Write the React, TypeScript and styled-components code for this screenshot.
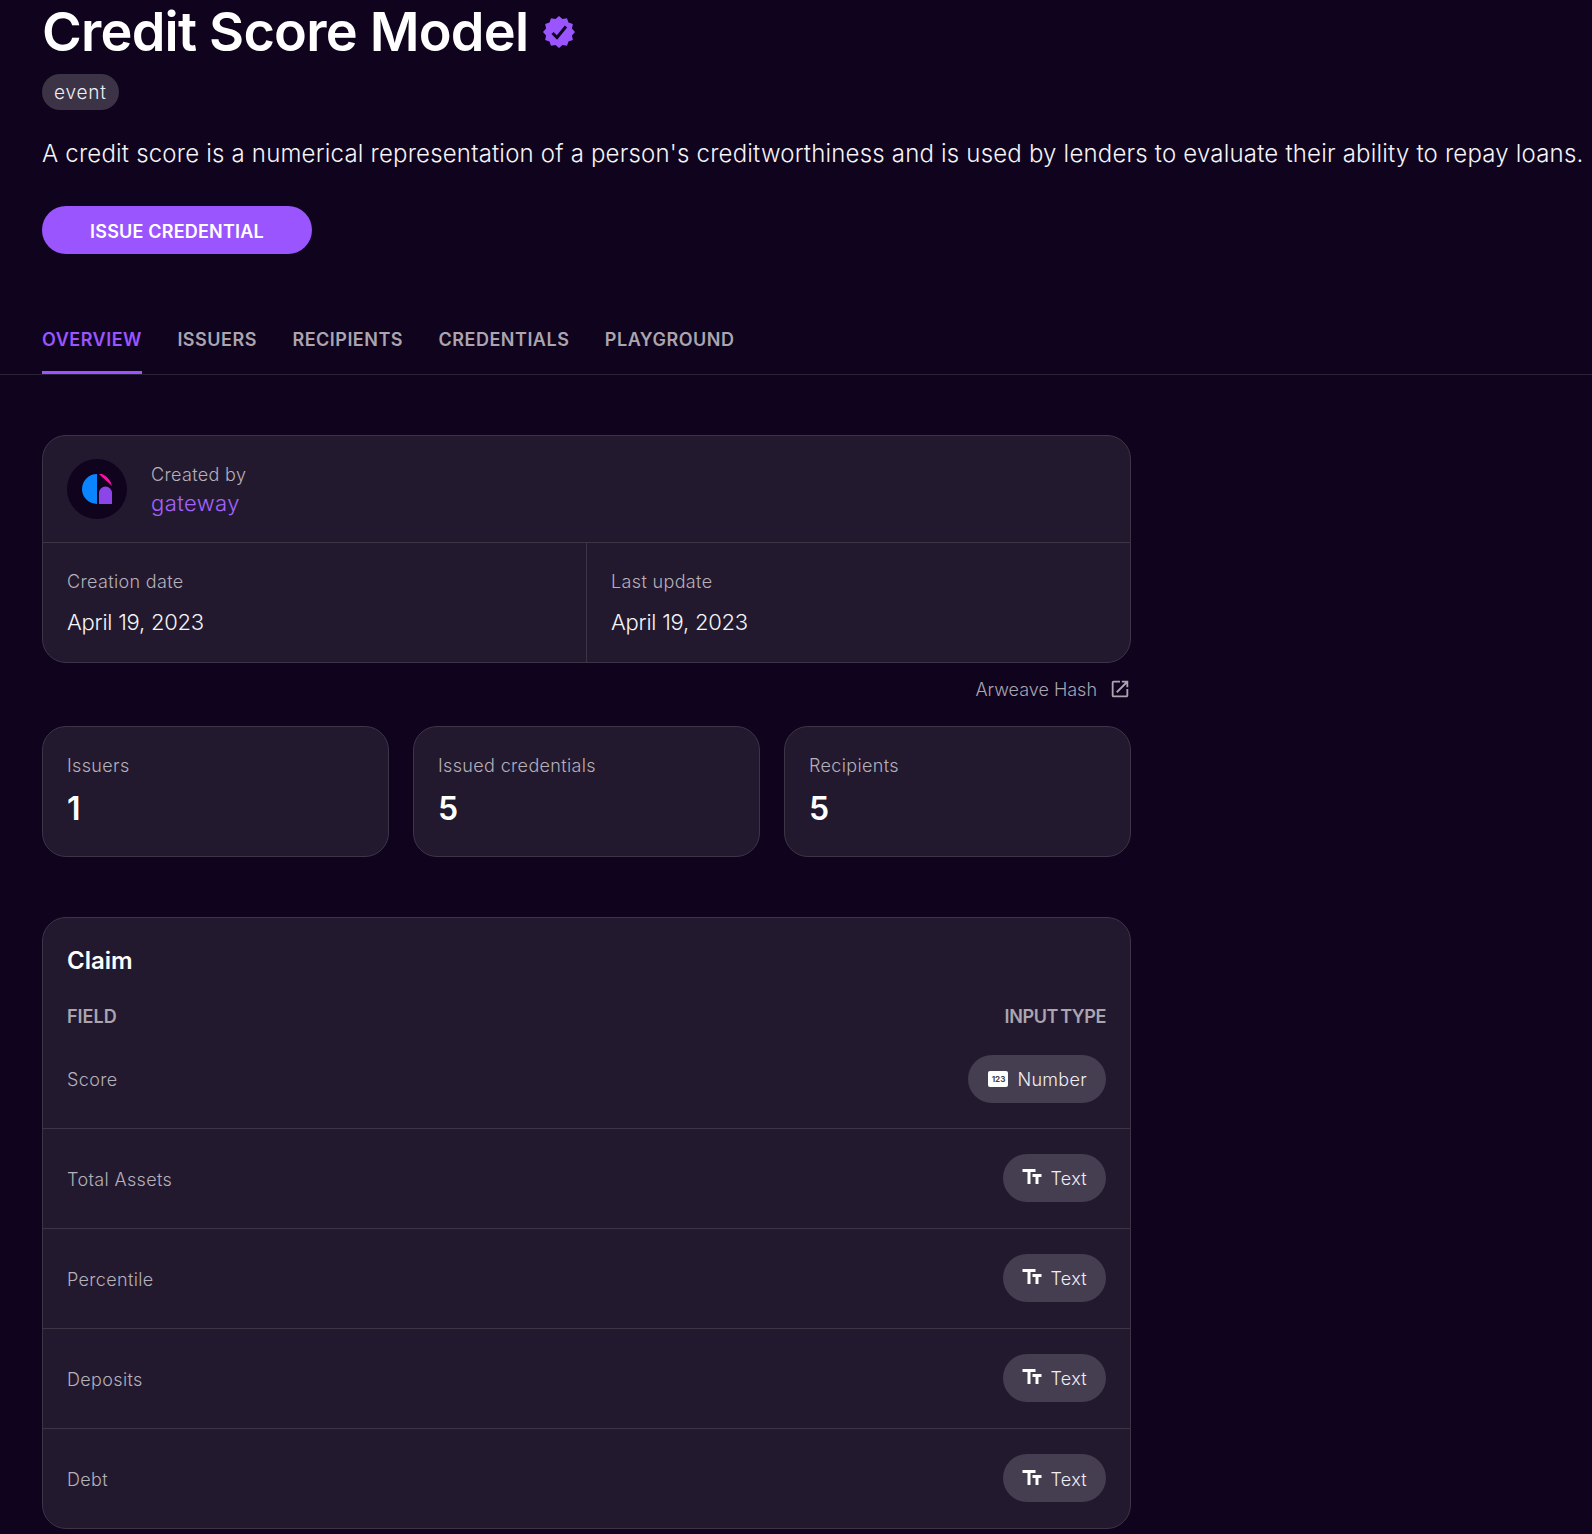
import React from 'react'
import styled, { createGlobalStyle } from 'styled-components'
import { MdOutlineOpenInNew, MdTextFields } from 'react-icons/md'

const GlobalStyle = createGlobalStyle`
  html, body {
    margin: 0;
    padding: 0;
    background: #0f031e;
  }
  body {
    color: #ffffff;
    font-family: 'Inter', 'Liberation Sans', sans-serif;
  }
  * {
    box-sizing: border-box;
  }
`

const Page = styled.div`
  width: 1592px;
  height: 1534px;
  overflow: hidden;
  background: #0f031e;
`

const Header = styled.header`
  padding: 0 0 0 42px;
  height: 375px;
  border-bottom: 1px solid #2b2235;
  display: flex;
  flex-direction: column;
  align-items: flex-start;
`

const TitleRow = styled.div`
  display: flex;
  align-items: center;
  gap: 15px;
  height: 64px;
`

const Title = styled.h1`
  margin: 0;
  font-size: 54px;
  line-height: 64px;
  font-weight: 600;
  letter-spacing: -0.77px;
`

const BadgeIcon = styled.svg`
  width: 32px;
  height: 32px;
`

const TypeChip = styled.span`
  margin-top: 10px;
  height: 36px;
  padding: 1px 12px 0;
  display: inline-flex;
  align-items: center;
  border-radius: 18px;
  background: #3c3347;
  font-size: 19px;
  font-weight: 300;
  letter-spacing: 0.8px;
  color: #f0eef2;
`

const Description = styled.p`
  margin: 26px 0 0;
  font-size: 24px;
  line-height: 36px;
  font-weight: 300;
  white-space: nowrap;
  color: #f5f4f6;
  letter-spacing: 0.19px;
`

const PrimaryButton = styled.button`
  margin-top: 34px;
  width: 270px;
  height: 49px;
  padding: 3px 0 0;
  border: 0;
  border-radius: 25px;
  background: #9a55ff;
  color: #ffffff;
  font-family: inherit;
  font-size: 18px;
  font-weight: 600;
  letter-spacing: 0.2px;
`

const Tabs = styled.nav`
  margin-top: 63px;
  display: flex;
  gap: 35.5px;
`

const Tab = styled.span<{ $active?: boolean }>`
  height: 57px;
  padding-top: 9px;
  line-height: 28px;
  font-size: 18px;
  font-weight: 600;
  letter-spacing: 0.5px;
  color: ${({ $active }) => ($active ? '#9a55ff' : '#aaa5af')};
  border-bottom: 3px solid ${({ $active }) => ($active ? '#9a55ff' : 'transparent')};
`

const Content = styled.main`
  width: 1173px;
  padding: 60px 42px 0;
`

const Card = styled.section`
  background: #23192e;
  border: 1px solid #3d3446;
  border-radius: 24px;
`

const CreatorRow = styled.div`
  height: 107px;
  padding: 0 24px;
  display: flex;
  align-items: center;
  gap: 24px;
  border-bottom: 1px solid #3d3446;
`

const Avatar = styled.svg`
  width: 60px;
  height: 60px;
  flex: none;
`

const CreatorText = styled.div`
  display: flex;
  flex-direction: column;
  padding-top: 1px;
`

const MutedLabel = styled.span`
  font-size: 18px;
  line-height: 28px;
  font-weight: 300;
  letter-spacing: 0.35px;
  color: #b5b0ba;
`

const CreatorName = styled.span`
  font-size: 22px;
  line-height: 29px;
  font-weight: 300;
  letter-spacing: 0.4px;
  color: #a463ff;
`

const DateGrid = styled.div`
  display: grid;
  grid-template-columns: 543px 1fr;
`

const DateCell = styled.div`
  height: 119px;
  padding: 25px 24px 0;
  display: flex;
  flex-direction: column;
  gap: 10px;
  & + & {
    border-left: 1px solid #3d3446;
  }
`

const DateValue = styled.span`
  font-size: 22px;
  line-height: 32px;
  font-weight: 300;
  letter-spacing: -0.25px;
  color: #f5f4f6;
`

const HashRow = styled.div`
  height: 52px;
  display: flex;
  align-items: center;
  justify-content: flex-end;
  gap: 12px;
  color: #aaa5af;
  font-size: 18px;
  font-weight: 300;
  svg {
    width: 22px;
    height: 22px;
  }
`

const StatGrid = styled.div`
  margin-top: 11px;
  display: grid;
  grid-template-columns: repeat(3, 1fr);
  gap: 24px;
`

const StatCard = styled(Card)`
  height: 131px;
  padding: 25px 24px 0;
`

const StatValue = styled.div`
  margin-top: 9px;
  font-size: 32px;
  line-height: 40px;
  font-weight: 600;
`

const ClaimCard = styled(Card)`
  margin-top: 60px;
  height: 612px;
`

const ClaimHead = styled.div`
  padding: 25px 24px 0;
`

const ClaimTitle = styled.h2`
  margin: 0;
  font-size: 24px;
  line-height: 36px;
  font-weight: 600;
`

const ColumnHeads = styled.div`
  margin-top: 24px;
  display: flex;
  justify-content: space-between;
  font-size: 18px;
  line-height: 28px;
  font-weight: 600;
  color: #aaa5af;
  span + span {
    letter-spacing: -0.4px;
    word-spacing: -2px;
  }
`

const TypePill = styled.span`
  height: 48px;
  margin-bottom: 2px;
  padding: 2px 19px 0 17px;
  display: inline-flex;
  align-items: center;
  gap: 7px;
  border-radius: 24px;
  background: #453d50;
  font-size: 18px;
  font-weight: 300;
  letter-spacing: 0.3px;
  color: #f0eef2;
  svg {
    width: 24px;
    height: 24px;
    margin-bottom: 3px;
    color: #ffffff;
  }
`

const NumberGlyph = styled.span`
  margin: 0 2px 2px 3px;
  width: 20px;
  height: 16px;
  border-radius: 2px;
  background: #ffffff;
  color: #453d50;
  font-size: 8px;
  font-weight: 700;
  letter-spacing: 0;
  line-height: 16px;
  text-align: center;
`

const FieldRow = styled.div`
  height: 100px;
  padding: 0 24px;
  display: flex;
  align-items: center;
  justify-content: space-between;
  border-bottom: 1px solid #3d3446;
  &:last-child {
    border-bottom: 0;
  }
  ${MutedLabel} {
    margin-top: 2px;
  }
`

const FirstRow = styled(FieldRow)`
  height: 98px;
  ${MutedLabel} {
    margin-top: 0;
  }
`

const FIELDS = ['Total Assets', 'Percentile', 'Deposits', 'Debt']

// scalloped badge outline, 12 teeth round the centre of a 32 box
const BADGE_POINTS = Array.from({ length: 24 }, (_, i) => {
  const angle = (i * Math.PI) / 12 - Math.PI / 2
  const radius = i % 2 === 0 ? 16 : 13.4
  return `${(16 + radius * Math.cos(angle)).toFixed(2)},${(16 + radius * Math.sin(angle)).toFixed(2)}`
}).join(' ')

function VerifiedBadge() {
  return (
    <BadgeIcon viewBox="0 0 32 32">
      <polygon points={BADGE_POINTS} fill="#9a55ff" />
      <path d="M9.5 17L14 21.5L23 10.5" fill="none" stroke="#0f031e" strokeWidth="3" />
    </BadgeIcon>
  )
}

function GatewayAvatar() {
  return (
    <Avatar viewBox="0 0 60 60">
      <circle cx="30" cy="30" r="30" fill="#0f031e" />
      <path d="M30 15A15 15 0 0 0 30 45Z" fill="#0a84ff" />
      <path d="M32 45V34A6.5 6.5 0 0 1 45 34V45Z" fill="#8b45e8" />
      <path d="M32 15H35C40 17 44 22 45 27C41 23 36 19 32 15Z" fill="#ff0fa8" />
    </Avatar>
  )
}

export default function App() {
  return (
    <Page>
      <GlobalStyle />
      <Header>
        <TitleRow>
          <Title>Credit Score Model</Title>
          <VerifiedBadge />
        </TitleRow>
        <TypeChip>event</TypeChip>
        <Description>
          A credit score is a numerical representation of a person's creditworthiness and is used by lenders to
          evaluate their ability to repay loans.
        </Description>
        <PrimaryButton>ISSUE CREDENTIAL</PrimaryButton>
        <Tabs>
          <Tab $active>OVERVIEW</Tab>
          <Tab>ISSUERS</Tab>
          <Tab>RECIPIENTS</Tab>
          <Tab>CREDENTIALS</Tab>
          <Tab>PLAYGROUND</Tab>
        </Tabs>
      </Header>
      <Content>
        <Card>
          <CreatorRow>
            <GatewayAvatar />
            <CreatorText>
              <MutedLabel>Created by</MutedLabel>
              <CreatorName>gateway</CreatorName>
            </CreatorText>
          </CreatorRow>
          <DateGrid>
            <DateCell>
              <MutedLabel>Creation date</MutedLabel>
              <DateValue>April 19, 2023</DateValue>
            </DateCell>
            <DateCell>
              <MutedLabel>Last update</MutedLabel>
              <DateValue>April 19, 2023</DateValue>
            </DateCell>
          </DateGrid>
        </Card>
        <HashRow>
          Arweave Hash
          <MdOutlineOpenInNew />
        </HashRow>
        <StatGrid>
          <StatCard>
            <MutedLabel>Issuers</MutedLabel>
            <StatValue>1</StatValue>
          </StatCard>
          <StatCard>
            <MutedLabel>Issued credentials</MutedLabel>
            <StatValue>5</StatValue>
          </StatCard>
          <StatCard>
            <MutedLabel>Recipients</MutedLabel>
            <StatValue>5</StatValue>
          </StatCard>
        </StatGrid>
        <ClaimCard>
          <ClaimHead>
            <ClaimTitle>Claim</ClaimTitle>
            <ColumnHeads>
              <span>FIELD</span>
              <span>INPUT TYPE</span>
            </ColumnHeads>
          </ClaimHead>
          <FirstRow>
            <MutedLabel>Score</MutedLabel>
            <TypePill>
              <NumberGlyph>123</NumberGlyph>
              Number
            </TypePill>
          </FirstRow>
          {FIELDS.map((name) => (
            <FieldRow key={name}>
              <MutedLabel>{name}</MutedLabel>
              <TypePill>
                <MdTextFields />
                Text
              </TypePill>
            </FieldRow>
          ))}
        </ClaimCard>
      </Content>
    </Page>
  )
}
